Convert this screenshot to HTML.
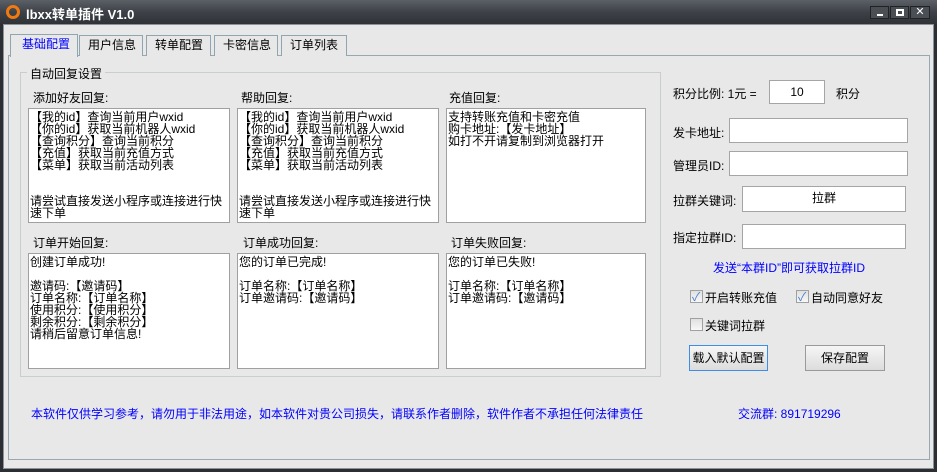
<!DOCTYPE html>
<html><head><meta charset="utf-8"><style>
*{margin:0;padding:0;box-sizing:border-box}
body{width:937px;height:472px;overflow:hidden;background:#2b2e33;font-family:"Liberation Sans","WenQuanYi Zen Hei","Noto Sans CJK SC",sans-serif;font-size:12px;color:#000;position:relative}
.a{position:absolute;white-space:nowrap}
#title{left:0;top:0;width:937px;height:24px;background:linear-gradient(#5b5f66,#3e4248 50%,#2f3237);}
#client{left:3px;top:24px;width:931px;height:445px;background:#e8e8e8;border:1px solid #8d9299}
.ta{position:absolute;background:#fff;border:1px solid #a0a0a0;line-height:12px;font-size:12px;padding:2px 1px;white-space:pre;overflow:hidden}
.in{position:absolute;background:#fff;border:1px solid #a5a5a5;text-align:center;line-height:22px}
.tab{position:absolute;top:35px;height:21px;border:1px solid #8fa5b0;border-bottom:none;background:#e8e8e8;font-size:12px;line-height:19px;padding-left:8px}
.cb{position:absolute;width:13px;height:13px;border:1px solid #a0a0a0;background:linear-gradient(#e0e0e0,#f8f8f8)}
.cb span{position:absolute;left:1px;top:-3px;color:#4a7fd0;font-size:12px}
.btn{position:absolute;height:26px;border:1px solid #9a9a9a;background:linear-gradient(#f6f6f6,#dcdcdc);text-align:center;line-height:24px}
</style></head><body>
<div id="title" class="a"></div>
<div class="a" style="left:6px;top:5px;width:14px;height:14px;border-radius:50%;border:3px solid #f07a10"></div>
<div class="a" style="left:26px;top:4px;color:#fff;font-weight:bold;font-size:13px">lbxx转单插件 V1.0</div>
<div class="a" style="left:870px;top:6px;width:19px;height:13px;border:1px solid #222;background:#4a4e55"><div style="position:absolute;left:6px;top:7px;width:6px;height:2px;background:#fff"></div></div>
<div class="a" style="left:890px;top:6px;width:19px;height:13px;border:1px solid #222;background:#4a4e55"><div style="position:absolute;left:5px;top:2px;width:8px;height:7px;border:2px solid #fff"></div></div>
<div class="a" style="left:910px;top:6px;width:20px;height:13px;border:1px solid #222;background:#4a4e55;color:#fff;font-size:11px;line-height:11px;text-align:center">✕</div>
<div id="client" class="a"></div>
<div class="a" style="left:8px;top:55px;width:922px;height:405px;border:1px solid #97a8b2"></div>
<div class="tab" style="left:10px;top:34px;width:68px;height:23px;color:#0000ff;z-index:2;padding-left:11px">基础配置</div>
<div class="tab" style="left:79px;width:64px">用户信息</div>
<div class="tab" style="left:146px;width:65px">转单配置</div>
<div class="tab" style="left:214px;width:64px">卡密信息</div>
<div class="tab" style="left:281px;width:66px">订单列表</div>
<div class="a" style="left:20px;top:72px;width:641px;height:305px;border:1px solid #c8cdd0"></div>
<div class="a" style="left:27px;top:65px;background:#e8e8e8;padding:0 3px">自动回复设置</div>
<div class="a" style="left:33px;top:89px">添加好友回复:</div>
<div class="a" style="left:241px;top:89px">帮助回复:</div>
<div class="a" style="left:449px;top:89px">充值回复:</div>
<div class="ta" style="left:28px;top:108px;width:202px;height:115px">【我的id】查询当前用户wxid
【你的id】获取当前机器人wxid
【查询积分】查询当前积分
【充值】获取当前充值方式
【菜单】获取当前活动列表


请尝试直接发送小程序或连接进行快
速下单</div>
<div class="ta" style="left:237px;top:108px;width:202px;height:115px">【我的id】查询当前用户wxid
【你的id】获取当前机器人wxid
【查询积分】查询当前积分
【充值】获取当前充值方式
【菜单】获取当前活动列表


请尝试直接发送小程序或连接进行快
速下单</div>
<div class="ta" style="left:446px;top:108px;width:200px;height:115px">支持转账充值和卡密充值
购卡地址:【发卡地址】
如打不开请复制到浏览器打开</div>
<div class="a" style="left:33px;top:234px">订单开始回复:</div>
<div class="a" style="left:243px;top:234px">订单成功回复:</div>
<div class="a" style="left:451px;top:234px">订单失败回复:</div>
<div class="ta" style="left:28px;top:253px;width:202px;height:116px">创建订单成功!

邀请码:【邀请码】
订单名称:【订单名称】
使用积分:【使用积分】
剩余积分:【剩余积分】
请稍后留意订单信息!</div>
<div class="ta" style="left:237px;top:253px;width:202px;height:116px">您的订单已完成!

订单名称:【订单名称】
订单邀请码:【邀请码】</div>
<div class="ta" style="left:446px;top:253px;width:200px;height:116px">您的订单已失败!

订单名称:【订单名称】
订单邀请码:【邀请码】</div>
<div class="a" style="left:673px;top:85px">积分比例: 1元 =</div>
<div class="in" style="left:769px;top:80px;width:56px;height:24px">10</div>
<div class="a" style="left:836px;top:85px">积分</div>
<div class="a" style="left:673px;top:124px">发卡地址:</div>
<div class="in" style="left:729px;top:118px;width:179px;height:25px"></div>
<div class="a" style="left:673px;top:157px">管理员ID:</div>
<div class="in" style="left:729px;top:151px;width:179px;height:25px"></div>
<div class="a" style="left:673px;top:192px">拉群关键词:</div>
<div class="in" style="left:742px;top:186px;width:164px;height:26px">拉群</div>
<div class="a" style="left:673px;top:229px">指定拉群ID:</div>
<div class="in" style="left:742px;top:224px;width:164px;height:25px"></div>
<div class="a" style="left:713px;top:259px;color:#0000ff">发送“本群ID”即可获取拉群ID</div>
<div class="cb" style="left:690px;top:290px"><span>✓</span></div>
<div class="a" style="left:705px;top:289px">开启转账充值</div>
<div class="cb" style="left:796px;top:290px"><span>✓</span></div>
<div class="a" style="left:811px;top:289px">自动同意好友</div>
<div class="cb" style="left:690px;top:318px"></div>
<div class="a" style="left:705px;top:317px">关键词拉群</div>
<div class="btn" style="left:689px;top:345px;width:79px;border-color:#3c8ee8">载入默认配置</div>
<div class="btn" style="left:805px;top:345px;width:80px">保存配置</div>
<div class="a" style="left:31px;top:405px;color:#0000ff">本软件仅供学习参考，请勿用于非法用途，如本软件对贵公司损失，请联系作者删除，软件作者不承担任何法律责任</div>
<div class="a" style="left:738px;top:405px;color:#0000ff">交流群: 891719296</div>
</body></html>
